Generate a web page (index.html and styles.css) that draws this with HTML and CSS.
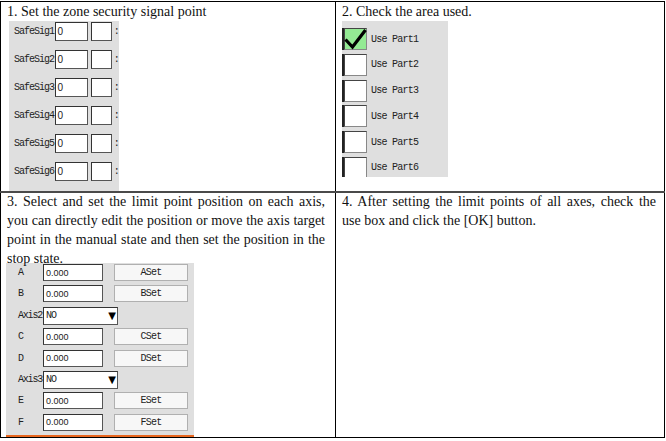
FILE: index.html
```html
<!DOCTYPE html>
<html lang="en">
<head>
    <meta charset="UTF-8">
    <meta name="viewport" content="width=device-width, initial-scale=1.0">
    <title>Zone Security Setup</title>
    <link rel="stylesheet" href="styles.css">
</head>
<body>
    <table class="guide">
        <tr class="first-row">
            <td class="step step-left">
                <p class="step-title">1. Set the zone security signal point</p>
                <div class="panel sig-panel">
                    <div class="sig-row"><span class="ui-label sig-label">SafeSig1</span><span class="field sig-field">0</span><span class="field mini-box"></span><span class="ui-label cut">:</span></div>
                    <div class="sig-row"><span class="ui-label sig-label">SafeSig2</span><span class="field sig-field">0</span><span class="field mini-box"></span><span class="ui-label cut">:</span></div>
                    <div class="sig-row"><span class="ui-label sig-label">SafeSig3</span><span class="field sig-field">0</span><span class="field mini-box"></span><span class="ui-label cut">:</span></div>
                    <div class="sig-row"><span class="ui-label sig-label">SafeSig4</span><span class="field sig-field">0</span><span class="field mini-box"></span><span class="ui-label cut">:</span></div>
                    <div class="sig-row"><span class="ui-label sig-label">SafeSig5</span><span class="field sig-field">0</span><span class="field mini-box"></span><span class="ui-label cut">:</span></div>
                    <div class="sig-row"><span class="ui-label sig-label">SafeSig6</span><span class="field sig-field">0</span><span class="field mini-box"></span><span class="ui-label cut">:</span></div>
                </div>
            </td>
            <td class="step step-right">
                <p class="step-title">2. Check the area used.</p>
                <div class="panel part-panel">
                    <div class="part-row">
                        <span class="check checked">
                            <svg width="23" height="22" viewBox="0 0 23 22">
                                <polyline points="1.5,11.5 8.5,19 21.5,2" fill="none" stroke="#000" stroke-width="3.2"/>
                            </svg>
                        </span>
                        <span class="ui-label">Use Part1</span>
                    </div>
                    <div class="part-row"><span class="check"></span><span class="ui-label">Use Part2</span></div>
                    <div class="part-row"><span class="check"></span><span class="ui-label">Use Part3</span></div>
                    <div class="part-row"><span class="check"></span><span class="ui-label">Use Part4</span></div>
                    <div class="part-row"><span class="check"></span><span class="ui-label">Use Part5</span></div>
                    <div class="part-row"><span class="check"></span><span class="ui-label">Use Part6</span></div>
                </div>
            </td>
        </tr>
        <tr class="second-row">
            <td class="step step-left">
                <p class="step-text">3. Select and set the limit point position on each axis, you can directly edit the position or move the axis target point in the manual state and then set the position in the stop state.</p>
                <div class="panel axis-panel">
                    <div class="axis-row"><span class="ui-label axis-label">A</span><span class="field num-field">0.000</span><span class="set-btn ui-label">ASet</span></div>
                    <div class="axis-row"><span class="ui-label axis-label">B</span><span class="field num-field">0.000</span><span class="set-btn ui-label">BSet</span></div>
                    <div class="axis-row"><span class="ui-label axis-label">Axis2</span><span class="field combo"><span class="ui-label">NO</span><span class="arrow">▼</span></span></div>
                    <div class="axis-row"><span class="ui-label axis-label">C</span><span class="field num-field">0.000</span><span class="set-btn ui-label">CSet</span></div>
                    <div class="axis-row"><span class="ui-label axis-label">D</span><span class="field num-field">0.000</span><span class="set-btn ui-label">DSet</span></div>
                    <div class="axis-row"><span class="ui-label axis-label">Axis3</span><span class="field combo"><span class="ui-label">NO</span><span class="arrow">▼</span></span></div>
                    <div class="axis-row"><span class="ui-label axis-label">E</span><span class="field num-field">0.000</span><span class="set-btn ui-label">ESet</span></div>
                    <div class="axis-row"><span class="ui-label axis-label">F</span><span class="field num-field">0.000</span><span class="set-btn ui-label">FSet</span></div>
                </div>
            </td>
            <td class="step step-right">
                <p class="step-text">4. After setting the limit points of all axes, check the use box and click the [OK] button.</p>
            </td>
        </tr>
    </table>
</body>
</html>
```

FILE: styles.css
```css
body {
    margin: 0;
    padding-top: 1px;
    background: white;
    font-family: "Liberation Serif", "Times New Roman", serif;
    color: #111;
}
.guide {
    border-collapse: collapse;
    width: 665px;
    table-layout: fixed;
}
.guide td {
    border: 1px solid #000;
    vertical-align: top;
}
.step-left {
    width: 318px;
    padding: 1px 10px 0 6px;
}
.step-right {
    padding: 1px 8px 0 6px;
}
.first-row td {
    height: 188px;
}
.second-row td {
    border-top: 2px solid #4a4a4a;
}
.step-title {
    margin: 0;
    font-size: 14px;
    line-height: 18px;
}
.step-text {
    margin: -2px 0 0;
    font-size: 14px;
    line-height: 19px;
    text-align: justify;
}
.panel {
    background: #dfdfdf;
    overflow: hidden;
}
.ui-label {
    font-family: "Liberation Mono", "DejaVu Sans Mono", monospace;
    font-size: 10px;
    letter-spacing: -0.75px;
    color: #222;
    white-space: nowrap;
}
.field {
    background: white;
    border: 1px solid #333;
    border-right-color: #555;
    border-bottom-color: #555;
    box-sizing: border-box;
    font-family: "Liberation Sans", Arial, sans-serif;
    font-size: 9px;
    color: #222;
    display: flex;
    align-items: center;
    padding-left: 2px;
}

/* step 1: signal points */
.sig-panel {
    width: 110px;
    margin-left: 2px;
    padding: 1px 0 10px;
    display: flex;
    flex-direction: column;
    gap: 10.2px;
}
.sig-row {
    display: flex;
    align-items: center;
    height: 18px;
}
.sig-label {
    width: 43px;
    padding-left: 5px;
    letter-spacing: -1px;
}
.sig-field {
    width: 35px;
    height: 19px;
    font-size: 10px;
}
.mini-box {
    width: 22px;
    height: 19px;
    margin-left: 3px;
}
.cut {
    margin-left: 2px;
}

/* step 2: used parts */
.part-panel {
    width: 106px;
    height: 149px;
    padding-top: 7px;
    display: flex;
    flex-direction: column;
    gap: 3.8px;
}
.part-row {
    display: flex;
    align-items: center;
    gap: 2px;
    height: 22px;
    flex-shrink: 0;
    border-left: 2px solid #222;
}
.part-row .ui-label {
    margin-left: 2px;
}
.check {
    width: 23px;
    height: 22px;
    box-sizing: border-box;
    background: white;
    border: 1px solid #444;
    border-right-color: #888;
    border-bottom-color: #888;
    flex-shrink: 0;
    position: relative;
}
.check svg {
    position: absolute;
    left: -1px;
    top: -1px;
}
.check.checked {
    background: #94ea94;
}

/* step 3: axis limits */
.axis-panel {
    width: 188px;
    margin: -5px 0 0 -1px;
    padding-top: 1px;
    border-bottom: 2px solid #e8661e;
}
.axis-row {
    display: flex;
    align-items: flex-start;
    height: 21.4px;
}
.axis-label {
    width: 25px;
    padding-left: 12px;
    line-height: 17px;
    letter-spacing: -1.2px;
}
.num-field {
    width: 60px;
    height: 17px;
}
.set-btn {
    width: 74px;
    height: 17px;
    box-sizing: border-box;
    margin-left: 11px;
    background: #f7f7f7;
    border: 1px solid #b0b0b0;
    text-align: center;
    line-height: 15px;
}
.combo {
    width: 75px;
    height: 18px;
    justify-content: space-between;
    padding-right: 1px;
}
.combo .ui-label {
    letter-spacing: -1px;
}
.arrow {
    font-family: "DejaVu Sans", sans-serif;
    font-size: 10px;
    color: #000;
}
```
